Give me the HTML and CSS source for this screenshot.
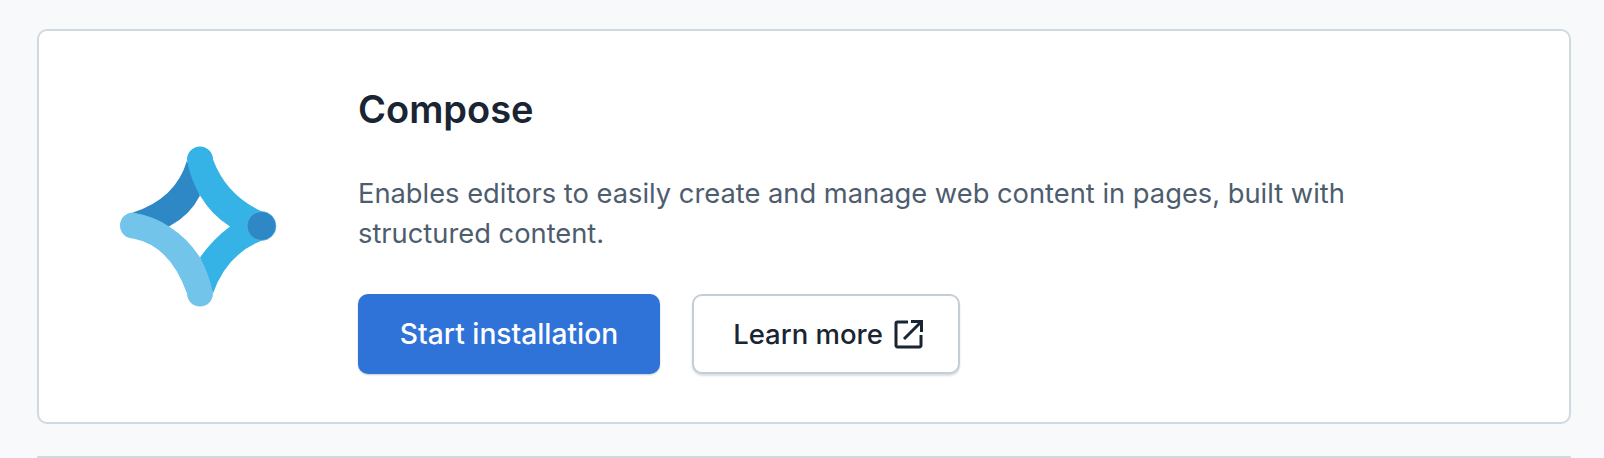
FILE: index.html
```html
<!DOCTYPE html>
<html lang="en">
<head>
<meta charset="utf-8">
<title>Compose</title>
<link rel="stylesheet" href="styles.css">
</head>
<body>
<main class="page">
  <section class="card">
    <svg class="logo" viewBox="119 146.500 160 160" aria-hidden="true">
      <path class="dark" d="M187 160Q176 198 133 212V226H169Q190 215 200 195Z"/>
      <path class="sky" d="M187 159A13 13 0 0 1 213 159Q226.500 195 262 211V240Q226.500 254 213 293L200 257Q213 238.500 230 226Q212 215 200 195Q190 178 187 159Z"/>
      <path class="pale" d="M133 212Q155 216 169 226Q188 238 200 257Q209 273 213 293A13 13 0 0 1 187 293Q170 245 133 238A13 13 0 0 1 133 212Z"/>
      <circle class="dot" cx="261.500" cy="225.500" r="14.500"/>
    </svg>
    <div class="body">
      <h2 class="title">Compose</h2>
      <p class="text">Enables editors to easily create and manage web content in pages, built with structured content.</p>
      <div class="actions">
        <a class="btn primary">Start installation</a>
        <a class="btn secondary">Learn more
          <svg class="ext" viewBox="0 0 30 30" aria-hidden="true">
            <path d="M14 3H3.500a1.500 1.500 0 0 0-1.500 1.500v22a1.500 1.500 0 0 0 1.500 1.500h22a1.500 1.500 0 0 0 1.500-1.500V16"/>
            <path d="M10 20L26 4M17 2.500h10.500V13"/>
          </svg>
        </a>
      </div>
    </div>
  </section>
  <section class="card next"></section>
</main>
</body>
</html>
```

FILE: styles.css
```css
* { box-sizing: border-box; }
html, body { margin: 0; height: 458px; overflow: hidden; background: #f7f9fb; }
body { font-family: Inter, "Liberation Sans", sans-serif; color: #1a2533; }
.page { height: 458px; padding: 29px 33px 0 37px; display: flex; flex-direction: column; gap: 32px; }
.card {
  display: flex; align-items: center; flex: none;
  height: 395px; background: #fff;
  border: 2px solid #cfdae0; border-radius: 10px;
}
.next { height: 2px; border-bottom: 0; }
.logo { width: 160px; height: 160px; margin: 0 79px 0 80px; flex: none; overflow: visible; }
.dark { fill: #2e88c5; }
.sky { fill: #35b2e6; }
.pale { fill: #72c4eb; }
.dot { fill: #2e88c5; stroke: #62bde8; stroke-width: .6; }
.body { width: 1030px; padding-top: 7px; }
.title { margin: 0 0 43px; font-size: 38px; line-height: 44px; font-weight: 600; }
.text { margin: 0 0 40px; font-size: 27.300px; line-height: 40px; color: #4e5d6e; }
.actions { display: flex; gap: 32px; }
.btn {
  display: flex; align-items: center; justify-content: center;
  height: 80px; border-radius: 10px; font-size: 27.500px; font-weight: 500;
}
.primary { width: 302px; font-size: 28.200px; background: #3073d8; color: #fff; box-shadow: 0 1px 2px rgba(30,50,70,.25); }
.secondary {
  width: 268px; gap: 11px; padding-left: 5px; background: #fff; color: #1a2533;
  border: 2px solid #c3ced6; box-shadow: 0 2px 2px rgba(30,50,70,.15);
}
.ext { width: 30px; height: 30px; fill: none; stroke: #1a2533; stroke-width: 3; }
```
